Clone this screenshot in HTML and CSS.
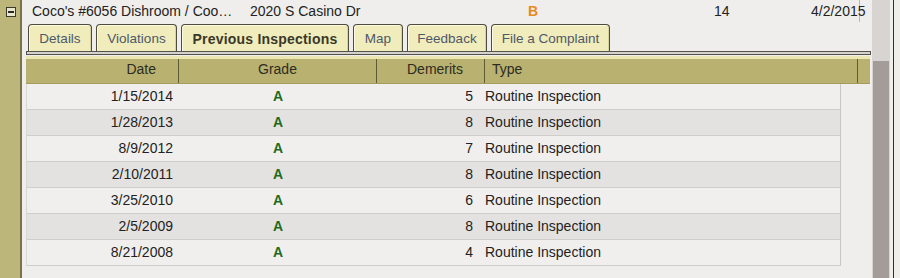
FILE: index.html
```html
<!DOCTYPE html>
<html>
<head>
<meta charset="utf-8">
<link rel="stylesheet" href="styles.css">
</head>
<body>
<div class="app">
  <div class="gutter"><span class="toggle"></span></div>
  <div class="main">
    <div class="summary">
      <span class="s-name">Coco's #6056 Dishroom / Coo…</span>
      <span class="s-addr">2020 S Casino Dr</span>
      <span class="s-grade">B</span>
      <span class="s-dem">14</span>
      <span class="s-date">4/2/2015</span>
    </div>
    <div class="panel">
      <div class="tabs">
        <span class="tab t1">Details</span>
        <span class="tab t2">Violations</span>
        <span class="tab t3 active">Previous Inspections</span>
        <span class="tab t4">Map</span>
        <span class="tab t5">Feedback</span>
        <span class="tab t6">File a Complaint</span>
      </div>
      <div class="tabline"></div>
      <div class="thead">
        <span class="h-date">Date</span>
        <span class="h-grade">Grade</span>
        <span class="h-dem">Demerits</span>
        <span class="h-type">Type</span>
        <span class="h-fill"></span>
      </div>
      <div class="rows">
        <div class="row"><span class="c-date">1/15/2014</span><span class="c-grade">A</span><span class="c-dem">5</span><span class="c-type">Routine Inspection</span></div>
        <div class="row alt"><span class="c-date">1/28/2013</span><span class="c-grade">A</span><span class="c-dem">8</span><span class="c-type">Routine Inspection</span></div>
        <div class="row"><span class="c-date">8/9/2012</span><span class="c-grade">A</span><span class="c-dem">7</span><span class="c-type">Routine Inspection</span></div>
        <div class="row alt"><span class="c-date">2/10/2011</span><span class="c-grade">A</span><span class="c-dem">8</span><span class="c-type">Routine Inspection</span></div>
        <div class="row"><span class="c-date">3/25/2010</span><span class="c-grade">A</span><span class="c-dem">6</span><span class="c-type">Routine Inspection</span></div>
        <div class="row alt"><span class="c-date">2/5/2009</span><span class="c-grade">A</span><span class="c-dem">8</span><span class="c-type">Routine Inspection</span></div>
        <div class="row"><span class="c-date">8/21/2008</span><span class="c-grade">A</span><span class="c-dem">4</span><span class="c-type">Routine Inspection</span></div>
      </div>
    </div>
  </div>
  <div class="scroll"><div class="track"><div class="thumb"></div></div><div class="edge"></div></div>
</div>
</body>
</html>
```
FILE: styles.css
```css
* { box-sizing: border-box; }
html, body { margin: 0; padding: 0; }
body {
  width: 900px;
  height: 278px;
  overflow: hidden;
  background: #efeeec;
  font-family: "Liberation Sans", Arial, sans-serif;
  font-size: 14px;
  color: #222;
}
.app { display: flex; height: 278px; }
.gutter {
  width: 22px;
  flex: none;
  background: #bcb67b;
  border-right: 2px solid #77734a;
  padding: 7px 0 0 6px;
}
.toggle {
  display: block;
  width: 10px;
  height: 10px;
  border: 1px solid #3c3a2a;
  background: #e9e6cf;
  position: relative;
}
.toggle::after {
  content: "";
  position: absolute;
  left: 1px; right: 1px; top: 3px;
  height: 2px;
  background: #2c2a20;
}
.main { width: 850px; flex: none; }
.summary {
  height: 22px;
  display: grid;
  grid-template-columns: 218px 278px 186px 97px 49px;
  padding-left: 10px;
  align-items: center;
  line-height: 22px;
}
.s-date { border-right: 1px solid #b9b8b4; padding-right: 2px; }
.s-grade { color: #e88a1d; font-weight: bold; }
.panel { padding-left: 4px; }
.tabs {
  display: flex;
  gap: 4px;
  padding-left: 2px;
  height: 29px;
  padding-top: 2px;
  align-items: flex-end;
}
.tab {
  height: 27px;
  border: 1px solid #4e4c3c;
  border-bottom: none;
  border-radius: 4px 4px 0 0;
  background: #f0ecbc;
  box-shadow: inset 1px 1px 0 #fbf9e2, inset -1px 0 0 #d8d4a0;
  font-size: 13.5px;
  color: #4f5868;
  display: flex;
  align-items: center;
  justify-content: center;
  padding-top: 1px;
}
.t1 { width: 64px; }
.t2 { width: 81px; }
.t3 { width: 168px; }
.t4 { width: 50px; }
.t5 { width: 80px; }
.t6 { width: 119px; }
.tab.active { font-weight: bold; font-size: 14px; color: #3a3828; letter-spacing: 0.2px; }
.tabline {
  width: 845px;
  height: 4px;
  border: 1px solid #55534a;
  background: #d3d2cc;
}
.thead {
  margin-top: 1px;
  width: 844px;
  height: 28px;
  display: grid;
  grid-template-columns: 153px 198px 108px 373px 12px;
  background: #b8b170;
  border-top: 3px solid #ebe7b5;
  border-bottom: 1px solid #a39c5e;
  line-height: 21px;
  color: #2e2c20;
}
.thead > span { border-right: 1px solid #5e5a36; }
.thead > span.h-fill { border-right: none; }
.h-date { text-align: right; padding-right: 22px; }
.h-grade { text-align: center; }
.h-dem { text-align: right; padding-right: 21px; }
.h-type { padding-left: 7px; }
.rows {
  width: 815px;
  border-right: 1px solid #c9c7c4;
  border-left: 1px solid #d9d7d4;
}
.row {
  display: grid;
  grid-template-columns: 152px 198px 108px 1fr;
  height: 26px;
  line-height: 25px;
  background: #f0efed;
  border-bottom: 1px solid #cfcdca;
}
.row.alt { background: #e4e2e0; }
.c-date { text-align: right; padding-right: 6px; }
.c-grade { text-align: center; font-weight: bold; color: #1d6b1f; }
.c-dem { text-align: right; padding-right: 12px; }
.c-type { padding-left: 0; }
.scroll { display: flex; flex: none; width: 28px; }
.track {
  width: 18px;
  background: #d8d4d2;
  padding-top: 61px;
}
.thumb { height: 217px; background: #a49c99; margin: 0 1px; }
.edge {
  width: 10px;
  background: #efeee8;
  border-left: 3px solid #efefec;
  box-shadow: inset 1px 0 0 #2e2e2a;
}
```
